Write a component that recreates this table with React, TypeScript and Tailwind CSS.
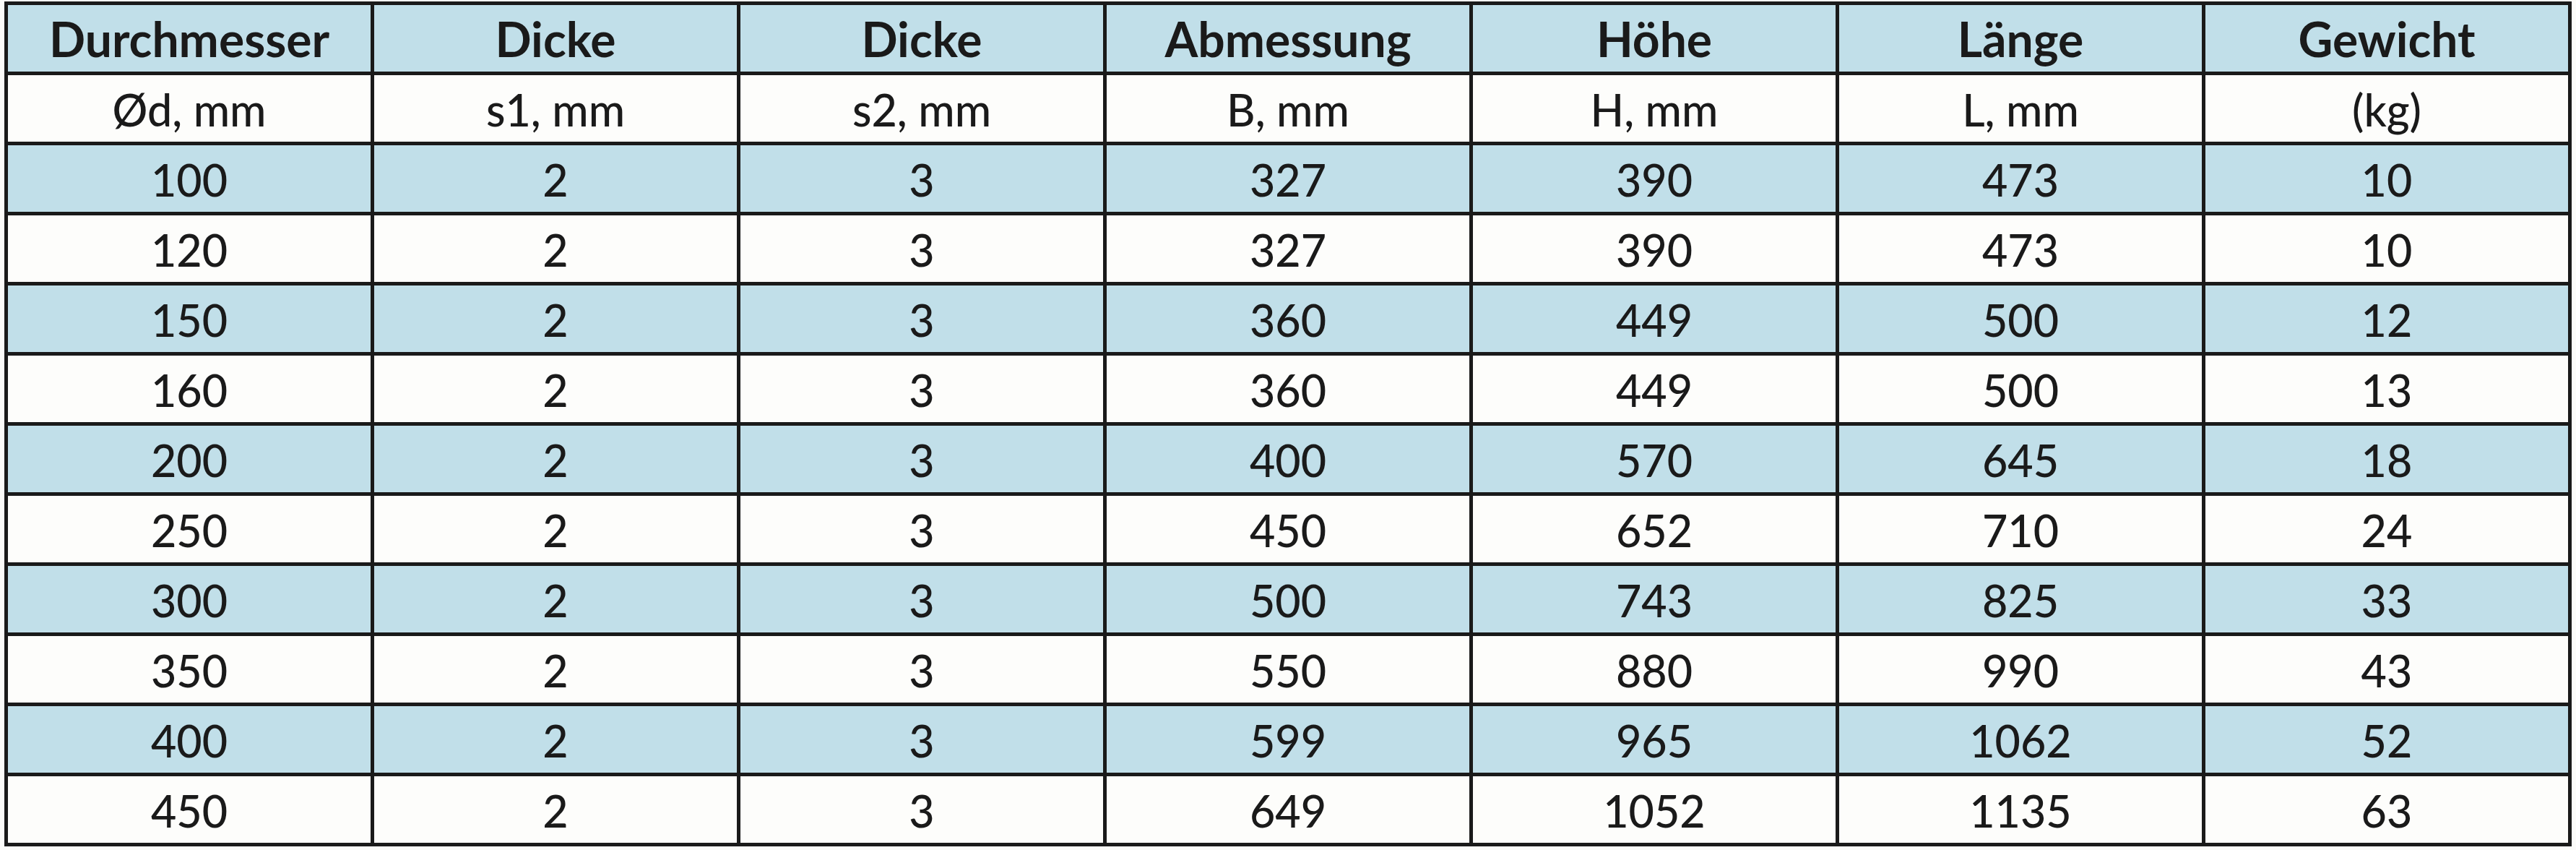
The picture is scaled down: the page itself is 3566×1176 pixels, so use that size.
import React from "react";

const headers1 = ["Durchmesser", "Dicke", "Dicke", "Abmessung", "Höhe", "Länge", "Gewicht"];
const headers2 = ["Ød, mm", "s1, mm", "s2, mm", "B, mm", "H, mm", "L, mm", "(kg)"];
const rows = [
  ["100", "2", "3", "327", "390", "473", "10"],
  ["120", "2", "3", "327", "390", "473", "10"],
  ["150", "2", "3", "360", "449", "500", "12"],
  ["160", "2", "3", "360", "449", "500", "13"],
  ["200", "2", "3", "400", "570", "645", "18"],
  ["250", "2", "3", "450", "652", "710", "24"],
  ["300", "2", "3", "500", "743", "825", "33"],
  ["350", "2", "3", "550", "880", "990", "43"],
  ["400", "2", "3", "599", "965", "1062", "52"],
  ["450", "2", "3", "649", "1052", "1135", "63"],
];

function Cell({ text, blue, bold }: { text: string; blue: boolean; bold?: boolean }) {
  return (
    <div
      className={
        "flex h-[92px] items-center justify-center pt-[2px] text-[#1a1a1a] leading-none " +
        (blue ? "bg-[#c1dfe9] " : "bg-[#fdfdfb] ") +
        (bold ? "font-bold text-[66px]" : "font-medium text-[61px]")
      }
    >
      {text}
    </div>
  );
}

export default function App() {
  return (
    <div
      className="w-[3566px] h-[1176px] bg-[#fbfbf9] pl-[6px] pt-[2px]"
      style={{ fontFamily: "Lato, 'Open Sans', sans-serif" }}
    >
      <div className="w-[3554px] grid grid-cols-7 gap-[5px] border-[5px] border-[#1a1a1a] bg-[#1a1a1a]">
        {headers1.map((h, i) => (
          <Cell key={"h1" + i} text={h} blue bold />
        ))}
        {headers2.map((h, i) => (
          <Cell key={"h2" + i} text={h} blue={false} />
        ))}
        {rows.map((r, ri) =>
          r.map((c, ci) => <Cell key={ri + "-" + ci} text={c} blue={ri % 2 === 0} />)
        )}
      </div>
    </div>
  );
}
